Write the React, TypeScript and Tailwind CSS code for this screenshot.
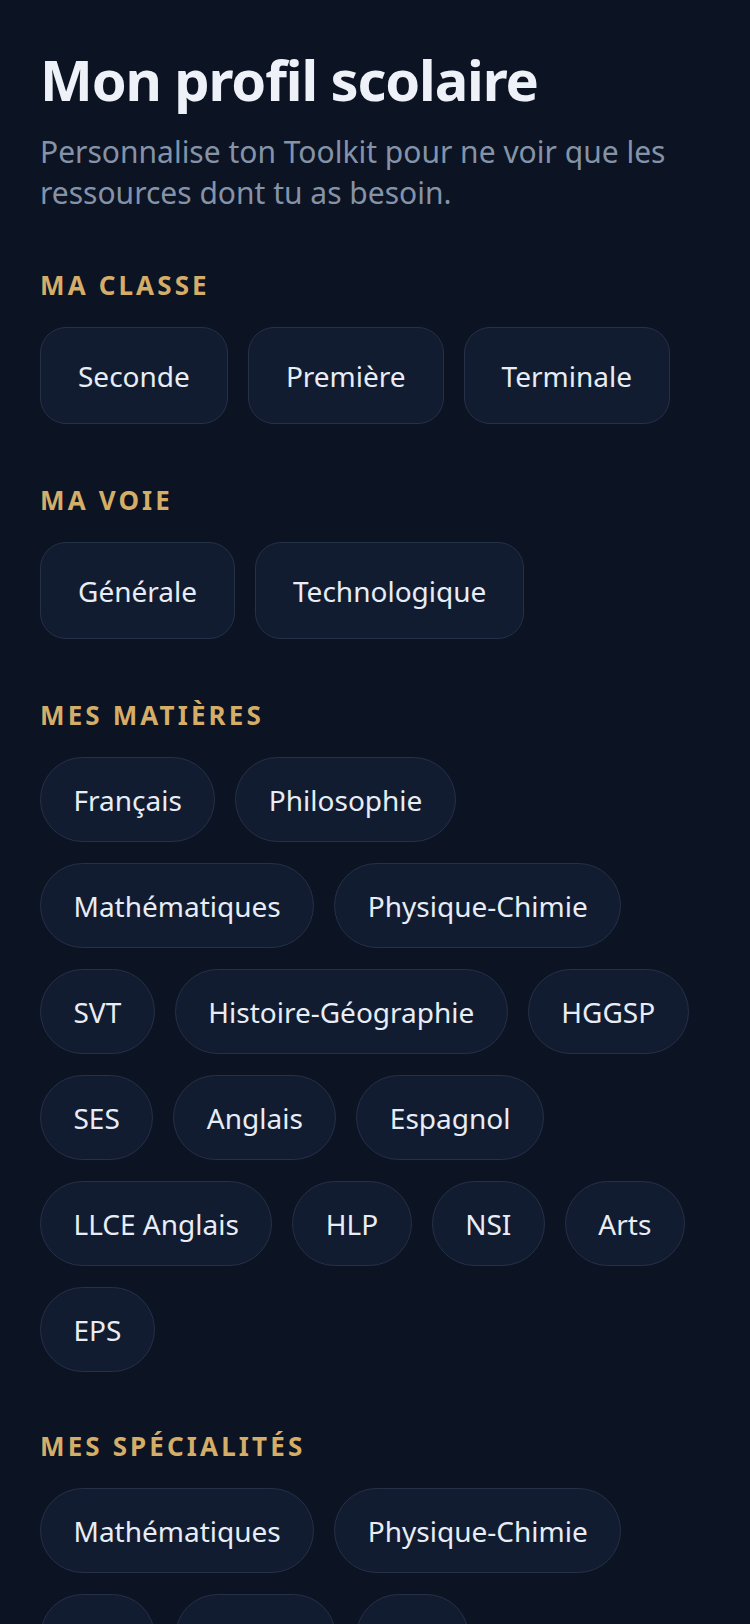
import React from 'react';

const classes = ["Seconde", "Première", "Terminale"];
const voies = ["Générale", "Technologique"];
const matieres = [
  "Français",
  "Philosophie",
  "Mathématiques",
  "Physique-Chimie",
  "SVT",
  "Histoire-Géographie",
  "HGGSP",
  "SES",
  "Anglais",
  "Espagnol",
  "LLCE Anglais",
  "HLP",
  "NSI",
  "Arts",
  "EPS"
];
const specialites = [
  "Mathématiques",
  "Physique-Chimie",
  "SVT",
  "HGGSP",
  "SES",
  "LLCE Anglais",
  "HLP",
  "NSI"
];

function SectionLabel({ children }: { children: React.ReactNode }) {
  return (
    <h2 className="text-[26px] leading-[32px] font-bold uppercase tracking-[0.12em] text-[#d4ae68] mb-[26px]">
      {children}
    </h2>
  );
}

function BlockButton({ label }: { label: string }) {
  return (
    <button className="h-[97px] px-[37px] rounded-[26px] border border-[#253148] bg-[#121c30] text-[28px] leading-[42px] text-[#e8edf5]">
      {label}
    </button>
  );
}

function Pill({ label }: { label: string }) {
  return (
    <button className="h-[85px] px-[32.5px] rounded-full border border-[#253148] bg-[#121c30] text-[28px] leading-[42px] text-[#e8edf5]">
      {label}
    </button>
  );
}

export default function App() {
  return (
    <div
      className="min-h-screen bg-[#0c1323] px-10 pt-[47px] pb-16"
      style={{ fontFamily: '"Noto Sans", "Open Sans", sans-serif' }}
    >
      <h1 className="text-[56px] leading-[64px] font-bold tracking-[-0.02em] text-[#eef2f8]">
        Mon profil scolaire
      </h1>
      <p className="mt-5 text-[30px] leading-[41px] text-[#8593a8]">
        Personnalise ton Toolkit pour ne voir que les ressources dont tu as besoin.
      </p>

      <section className="mt-[56px]">
        <SectionLabel>Ma classe</SectionLabel>
        <div className="flex flex-wrap gap-5">
          {classes.map((c) => (
            <BlockButton key={c} label={c} />
          ))}
        </div>
      </section>

      <section className="mt-[60px]">
        <SectionLabel>Ma voie</SectionLabel>
        <div className="flex flex-wrap gap-5">
          {voies.map((v) => (
            <BlockButton key={v} label={v} />
          ))}
        </div>
      </section>

      <section className="mt-[60px]">
        <SectionLabel>Mes matières</SectionLabel>
        <div className="flex flex-wrap gap-x-5 gap-y-[21px]">
          {matieres.map((m) => (
            <Pill key={m} label={m} />
          ))}
        </div>
      </section>

      <section className="mt-[58px]">
        <SectionLabel>Mes spécialités</SectionLabel>
        <div className="flex flex-wrap gap-x-5 gap-y-[21px]">
          {specialites.map((s) => (
            <Pill key={s} label={s} />
          ))}
        </div>
      </section>
    </div>
  );
}
